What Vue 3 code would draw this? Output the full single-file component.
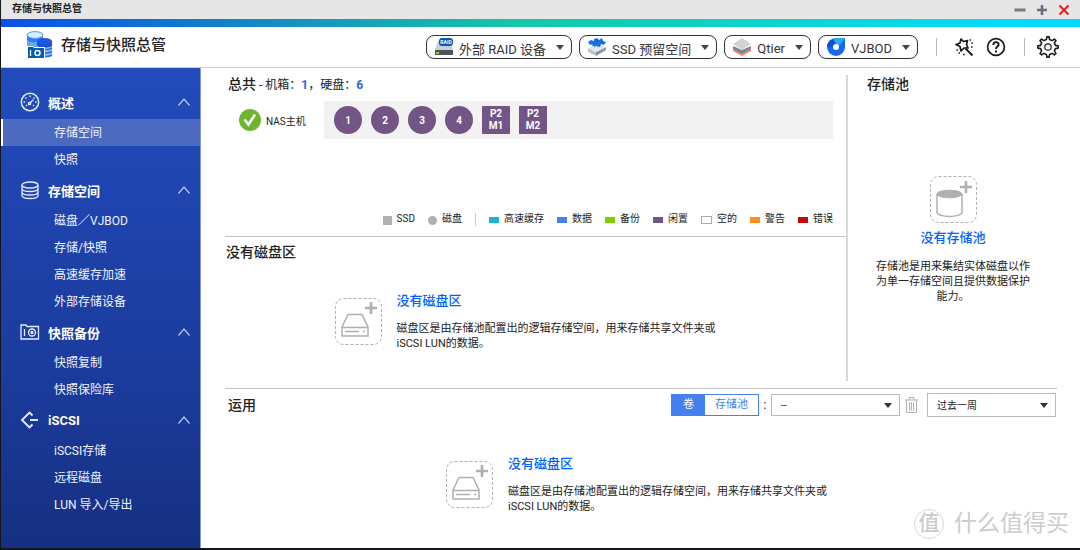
<script setup>
import { ref } from 'vue'

const groups = [
  { title: '概述', icon: 'gauge', items: ['存储空间', '快照'] },
  { title: '存储空间', icon: 'disks', items: ['磁盘／VJBOD', '存储/快照', '高速缓存加速', '外部存储设备'] },
  { title: '快照备份', icon: 'snapshot', items: ['快照复制', '快照保险库'] },
  { title: 'iSCSI', icon: 'iscsi', items: ['iSCSI存储', '远程磁盘', 'LUN 导入/导出'] }
]
const active = ref('0-0')

const tools = [
  { icon: 'raid', label: '外部 RAID 设备' },
  { icon: 'ssd', label: 'SSD 预留空间' },
  { icon: 'qtier', label: 'Qtier' },
  { icon: 'vjbod', label: 'VJBOD' }
]

const legend = [
  { label: '高速缓存', kind: 'cache' },
  { label: '数据', kind: 'data' },
  { label: '备份', kind: 'spare' },
  { label: '闲置', kind: 'free' },
  { label: '空的', kind: 'vacant' },
  { label: '警告', kind: 'warning' },
  { label: '错误', kind: 'error' }
]

const volumeText = '磁盘区是由存储池配置出的逻辑存储空间，用来存储共享文件夹或iSCSI LUN的数据。'

function gearPath(teeth, outer, inner) {
  const step = (Math.PI * 2) / teeth
  const at = (angle, r) =>
    `${(12 + r * Math.sin(angle)).toFixed(2)} ${(12 - r * Math.cos(angle)).toFixed(2)}`
  const parts = []
  for (let i = 0; i < teeth; i++) {
    const a = i * step
    parts.push(at(a - step * 0.27, inner), at(a - step * 0.14, outer), at(a + step * 0.14, outer), at(a + step * 0.27, inner))
  }
  return `M${parts.join('L')}Z`
}
const gear = gearPath(8, 10.2, 7.6)
</script>

<template>
  <div class="window">
    <header class="titlebar">
      <span class="window-name">存储与快照总管</span>
      <div class="window-buttons">
        <button type="button" aria-label="最小化">
          <svg width="12" height="12" viewBox="0 0 12 12"><path d="M0.5 6h11" stroke="#737a86" stroke-width="3" /></svg>
        </button>
        <button type="button" aria-label="最大化">
          <svg width="12" height="12" viewBox="0 0 12 12"><path d="M1 6h10M6 1v10" stroke="#686f7c" stroke-width="2.6" /></svg>
        </button>
        <button type="button" aria-label="关闭">
          <svg width="12" height="12" viewBox="0 0 12 12"><path d="M1.5 1.5l9 9M10.5 1.5l-9 9" stroke="#ee1c1c" stroke-width="2" /></svg>
        </button>
      </div>
    </header>
    <div class="stripe"></div>

    <div class="appbar">
      <svg class="logo" width="27" height="28" viewBox="0 0 27 28">
        <path d="M1 4v20h16V4z" fill="#5ca8fb" />
        <path d="M1 9c3 3 12 3 16 0v-5H1z" fill="#2f7df2" />
        <ellipse cx="9" cy="4" rx="8" ry="3.4" fill="#d5ecff" stroke="#4b9af7" />
        <path d="M11 10v15c3 2 12 2 15 0V10z" fill="#8cc4ff" />
        <path d="M11 10v5c4 2 11 2 15 0v-5z" fill="#1e50d8" />
        <path d="M15 18c4 1 8 1 11-1M17 21.500c3 1 7 0 9-1M17 25c3 1 7 0 9-1" stroke="#2d6be8" stroke-width="1.700" fill="none" />
        <ellipse cx="18.500" cy="10" rx="7.500" ry="3" fill="#2458dc" />
        <path d="M1 15h6l1 1h11v12H1z" fill="#fff" />
        <path d="M2 16h5l1 1h10v10H2z" fill="#075aac" />
        <path d="M4.500 19v6" stroke="#fff" stroke-width="1.300" />
        <circle cx="11.500" cy="22" r="2.500" fill="none" stroke="#fff" stroke-width="1.500" />
      </svg>
      <h1>存储与快照总管</h1>

      <div class="tools">
        <button v-for="t in tools" :key="t.icon" type="button" class="tool">
          <svg v-if="t.icon === 'raid'" width="20" height="18" viewBox="0 0 20 18">
            <path d="M4 3h12l3 9H1z" fill="#c9ced3" />
            <rect x="1" y="12" width="18" height="5" fill="#4b5560" />
            <rect x="2" y="14" width="3" height="2" fill="#7ee000" />
            <rect x="5" y="0" width="14" height="8" rx="3" fill="#0b57b0" />
            <text x="12" y="6" text-anchor="middle" class="raid-label">RAID</text>
          </svg>
          <svg v-else-if="t.icon === 'ssd'" width="20" height="18" viewBox="0 0 20 18">
            <path d="M1 10l8 4v4l-8-4z" fill="#b7c4d2" /><path d="M9 14l10-5v3l-10 6z" fill="#8896a6" />
            <path d="M1 10l9-5 9 4-10 5z" fill="#dfe8f1" />
            <path d="M1 4l3-2 3 1V1l3-1 2 2 3-2 1 3 3 1-2 3-3-1-1 3-4-1-2 1-1-3-3 1z" fill="#1673e6" />
            <path d="M6 5v3M10 2v3M15 3v3" stroke="#0a56bf" />
          </svg>
          <svg v-else-if="t.icon === 'qtier'" width="20" height="18" viewBox="0 0 20 18">
            <path d="M1 11l9 4 9-4v2l-9 5-9-5z" fill="#fa806d" />
            <path d="M1 8l9 4 9-4v3l-9 5-9-5z" fill="#7b8794" />
            <path d="M10 0l9 6-9 6-9-6z" fill="#d4d4d4" />
          </svg>
          <svg v-else width="20" height="18" viewBox="0 0 20 18">
            <path d="M19 0v9a9 9 0 1 1-9-9z" fill="#1668f2" />
            <path d="M19 0l-5 7-4-1-3-5 3-1z" fill="#29a9f5" />
            <path d="M1 9a9 9 0 0 1 6-8l3 5-3 3z" fill="#0d50d8" />
            <circle cx="10" cy="9" r="3" fill="#fff" />
          </svg>
          <span class="tool-label">{{ t.label }}</span>
          <svg width="8" height="5" viewBox="0 0 8 5"><path d="M0 0h8l-4 5z" fill="#444" /></svg>
        </button>
      </div>

      <div class="actions">
        <span class="divider"></span>
        <button type="button" class="wand" aria-label="向导">
          <svg width="20" height="20" viewBox="0 0 20 20" fill="none" stroke="#1a1a1a">
            <path d="M7 2l2.500 2.500 4-1-1 4 1.500 3.500-4 0-3 3-1-4.500L2 7.500l4-1.500z" stroke-width="1.700" stroke-linejoin="round" />
            <path d="M11.500 11.500l7 7" stroke-width="2" />
            <path d="M15.500 3h1.500M17.500 6h1.500M17 10h1.500M2.500 13h1.500M4.500 16h1.500M9 17.500h1.500" stroke-width="1.300" />
          </svg>
        </button>
        <button type="button" class="help" aria-label="帮助">
          <svg width="20" height="20" viewBox="0 0 20 20" fill="none" stroke="#1a1a1a">
            <circle cx="10" cy="10" r="8.400" stroke-width="1.700" />
            <path d="M7.300 8c0-4 5.400-3.600 5.400-.500C12.700 9.500 10 9.500 10 12" stroke-width="1.900" />
            <path d="M10 13.400v2" stroke-width="2" />
          </svg>
        </button>
        <span class="divider"></span>
        <button type="button" class="settings" aria-label="设置">
          <svg width="24" height="24" viewBox="0 0 24 24" fill="none" stroke="#1a1a1a">
            <path :d="gear" stroke-width="1.600" stroke-linejoin="round" />
            <circle cx="12" cy="12" r="3.200" stroke-width="1.200" />
          </svg>
        </button>
      </div>
    </div>

    <div class="body">
      <nav class="sidebar">
        <section v-for="(g, gi) in groups" :key="g.title">
          <button type="button" class="group">
            <svg width="20" height="20" viewBox="0 0 20 20" fill="none" stroke="#e6ecfb" stroke-width="1.300">
              <template v-if="g.icon === 'gauge'">
                <circle cx="10" cy="10" r="8.700" stroke-width="1.500" />
                <path d="M3.500 10h1.500M15 10h1.500M5.500 5.500l1 1M10 3.500V5M14.500 5.500l-1 1M9.500 11.500l4-4M6 14l1-1M14 14l-1-1" />
                <circle cx="9.500" cy="11.500" r="1.200" />
              </template>
              <template v-else-if="g.icon === 'disks'">
                <ellipse cx="10" cy="5" rx="8" ry="3" />
                <path d="M2 5v10.500c0 4 16 4 16 0V5M2 8.500c0 4 16 4 16 0M2 12c0 4 16 4 16 0" />
              </template>
              <template v-else-if="g.icon === 'snapshot'">
                <path d="M1 17V3h5l1 1.500h11.500V17z" />
                <path d="M4.500 7v7" />
                <circle cx="12" cy="10.500" r="3.500" /><circle cx="12" cy="10.500" r="1" fill="#e6ecfb" />
              </template>
              <template v-else>
                <path d="M12.500 5.500L9.500 2.500 2 10l7.500 7.500 3-3M10 10h8" stroke-width="1.900" />
              </template>
            </svg>
            <span>{{ g.title }}</span>
            <svg class="chevron" width="12" height="8" viewBox="0 0 12 8" fill="none"><path d="M0.500 7.500L6 1l5.500 6.500" stroke="#b7c6ee" stroke-width="1.200" /></svg>
          </button>
          <a
            v-for="(item, ii) in g.items"
            :key="item"
            href="#"
            class="item"
            :class="{ active: active === gi + '-' + ii }"
            @click.prevent="active = gi + '-' + ii"
          >{{ item }}</a>
        </section>
      </nav>

      <main>
        <div class="upper">
          <div class="left">
            <section class="overview">
              <p class="summary"><strong>总共</strong> - 机箱：<b>1</b>，硬盘：<b>6</b></p>
              <div class="host">
                <svg width="22" height="22" viewBox="0 0 22 22">
                  <circle cx="11" cy="11" r="11" fill="#6db52f" />
                  <path d="M5.500 10.500l4 5 6.500-10" fill="none" stroke="#fff" stroke-width="2.600" />
                </svg>
                <span class="host-name">NAS主机</span>
                <div class="disks">
                  <button v-for="n in 4" :key="n" type="button" class="disk">{{ n }}</button>
                  <button v-for="n in 2" :key="'m' + n" type="button" class="disk module"><span>P2</span><span>M{{ n }}</span></button>
                </div>
              </div>
              <ul class="legend">
                <li><i class="shape"></i>SSD</li>
                <li><i class="shape round"></i>磁盘</li>
                <li class="legend-divider"></li>
                <li v-for="l in legend" :key="l.kind"><i class="swatch" :class="l.kind"></i>{{ l.label }}</li>
              </ul>
            </section>

            <section class="volumes">
              <h2>没有磁盘区</h2>
              <div class="empty">
                <svg class="add-icon" width="47" height="47" viewBox="0 0 47 47" fill="none" stroke="#b0b0b0">
                  <rect x="0.500" y="0.500" width="46" height="46" rx="8" stroke-dasharray="3 2" />
                  <path d="M30 10h12M36 4v12" stroke-width="2.600" />
                  <path d="M7 29l6-12.500h14L33 29v9H7zM7 29.500h26" stroke-width="1.500" />
                  <path d="M10 33.500h14M28 33.500h2" stroke-width="1.500" />
                </svg>
                <div class="empty-text">
                  <a href="#">没有磁盘区</a>
                  <p>{{ volumeText }}</p>
                </div>
              </div>
            </section>
          </div>

          <section class="pool">
            <h2>存储池</h2>
            <div class="pool-empty">
              <svg width="47" height="47" viewBox="0 0 47 47" fill="none" stroke="#b0b0b0">
                <rect x="0.500" y="0.500" width="46" height="46" rx="8" stroke-dasharray="3 2" />
                <path d="M30 11h12M36 5v12" stroke-width="2.600" />
                <path d="M7 18v18c0 6 25 6 25 0V18" stroke-width="1.500" />
                <ellipse cx="19.500" cy="18" rx="12.500" ry="3.800" fill="#b0b0b0" />
              </svg>
              <a href="#">没有存储池</a>
              <p>存储池是用来集结实体磁盘以作为单一存储空间且提供数据保护能力。</p>
            </div>
          </section>
        </div>

        <section class="usage">
          <div class="usage-bar">
            <h2>运用</h2>
            <div class="segment">
              <button type="button" class="on">卷</button>
              <button type="button">存储池</button>
            </div>
            <span class="colon">:</span>
            <div class="select">
              <select aria-label="卷"><option>--</option></select>
              <svg width="8" height="5" viewBox="0 0 8 5"><path d="M0 0h8l-4 5z" fill="#333" /></svg>
            </div>
            <button type="button" class="trash" aria-label="删除">
              <svg width="13" height="16" viewBox="0 0 13 16" fill="none" stroke="#b0b0b0">
                <path d="M0 3h13M4 2.500v-2h5v2M1.500 3v12.500h10V3M4.500 5v8.500M6.500 5v8.500M8.500 5v8.500" />
              </svg>
            </button>
            <div class="select period">
              <select aria-label="时间范围"><option>过去一周</option></select>
              <svg width="8" height="5" viewBox="0 0 8 5"><path d="M0 0h8l-4 5z" fill="#333" /></svg>
            </div>
          </div>
          <div class="empty">
            <svg class="add-icon" width="47" height="47" viewBox="0 0 47 47" fill="none" stroke="#b0b0b0">
              <rect x="0.500" y="0.500" width="46" height="46" rx="8" stroke-dasharray="3 2" />
              <path d="M30 10h12M36 4v12" stroke-width="2.600" />
              <path d="M7 29l6-12.500h14L33 29v9H7zM7 29.500h26" stroke-width="1.500" />
              <path d="M10 33.500h14M28 33.500h2" stroke-width="1.500" />
            </svg>
            <div class="empty-text">
              <a href="#">没有磁盘区</a>
              <p>{{ volumeText }}</p>
            </div>
          </div>
        </section>
      </main>
    </div>

    <div class="watermark"><span class="seal">值</span>什么值得买</div>
  </div>
</template>

<style>
body {
  margin: 0;
}
</style>

<style scoped>
* {
  box-sizing: border-box;
}
.window {
  position: relative;
  display: flex;
  flex-direction: column;
  min-height: 100vh;
  border-left: 1px solid #15161c;
  border-bottom: 2px solid #15161c;
  background: #fff;
  color: #222;
  font-family: Roboto, "Noto Sans CJK SC", sans-serif;
  font-size: 12px;
}
svg {
  display: block;
  flex: none;
}
button {
  margin: 0;
  padding: 0;
  border: 0;
  background: none;
  color: inherit;
  font: inherit;
  cursor: pointer;
}
h1,
h2,
p,
ul {
  margin: 0;
  padding: 0;
}
a {
  text-decoration: none;
}
.titlebar {
  display: flex;
  align-items: center;
  justify-content: space-between;
  height: 19px;
  padding: 0 10px 0 11px;
  background: #e6e6e6;
}
.window-name {
  padding-bottom: 2px;
  font-size: 10px;
  font-weight: 700;
  line-height: 16px;
}
.window-buttons {
  display: flex;
  gap: 10px;
}
.stripe {
  height: 8px;
  background: linear-gradient(90deg, #0b50ec, #1180c8 20%, #16a0ba 33%, #14c8a8 48%, #0dd3c8 68%, #00dcff 95%);
}
.appbar {
  display: flex;
  align-items: center;
  height: 41px;
  padding: 0 20px 0 25px;
  border-bottom: 1px solid #ccc;
}
.logo {
  margin-bottom: 4px;
}
h1 {
  margin-left: 8px;
  padding-bottom: 4px;
  font-size: 15px;
  font-weight: 500;
  line-height: 24px;
  white-space: nowrap;
}
.tools {
  display: flex;
  gap: 7px;
  margin-left: auto;
}
.tool {
  display: flex;
  align-items: center;
  height: 24px;
  padding: 0 7px;
  border: 1px solid #333;
  border-radius: 8px;
  color: #333;
  font-size: 13px;
  white-space: nowrap;
}
.tool-label {
  margin: 0 10px 0 5px;
  padding-top: 2px;
}
.raid-label {
  fill: #fff;
  font-size: 5px;
  font-weight: 700;
}
.actions {
  display: flex;
  align-items: center;
  margin-left: 18px;
}
.divider {
  width: 1px;
  height: 18px;
  background: #bbb8a8;
}
.wand {
  margin-left: 17px;
}
.help {
  margin: 0 18px 0 12px;
}
.settings {
  margin-left: 11px;
}
.body {
  display: flex;
  flex: 1;
}
.sidebar {
  flex: none;
  width: 200px;
  padding-top: 17px;
  border-right: 1px solid #8598cf;
  background: linear-gradient(#224bbc, #1b3b9c 65%, #162f80);
  color: #fff;
}
.group {
  display: flex;
  align-items: center;
  width: 100%;
  height: 34px;
  padding: 0 10px 0 19px;
  font-size: 13px;
  font-weight: 700;
}
.group span {
  margin-left: 8px;
}
.chevron {
  margin-left: auto;
}
.item {
  display: block;
  height: 27px;
  padding-left: 53px;
  color: #f0f4ff;
  line-height: 28px;
}
.item.active {
  padding-left: 51px;
  border-left: 2px solid #fff;
  background: #4c6ac0;
}
main {
  flex: 1;
  min-width: 0;
  padding: 7px 23px 20px 24px;
}
h2 {
  font-size: 14px;
  font-weight: 500;
  line-height: 18px;
}
.upper {
  display: flex;
}
.left {
  flex: 1;
  min-width: 0;
}
.overview {
  padding-right: 13px;
  border-bottom: 1px solid #c4c4c4;
}
.summary {
  padding-left: 3px;
  line-height: 18px;
}
.summary strong {
  font-size: 14px;
  font-weight: 500;
}
.summary b {
  color: #2468d8;
}
.host {
  display: flex;
  align-items: center;
  margin-top: 7px;
  padding-left: 14px;
}
.host-name {
  width: 58px;
  margin-left: 5px;
  font-size: 10px;
}
.disks {
  display: flex;
  flex: 1;
  gap: 9px;
  padding: 5px 10px;
  background: #f2f2f2;
}
.disk {
  width: 28px;
  height: 28px;
  border-radius: 50%;
  background: #725586;
  color: #fff;
  font-size: 10px;
  font-weight: 700;
}
.module {
  display: flex;
  flex-direction: column;
  align-items: center;
  justify-content: center;
  border-radius: 0;
  line-height: 12px;
}
.legend {
  display: flex;
  align-items: center;
  justify-content: flex-end;
  gap: 13px;
  margin-top: 71px;
  padding-bottom: 8px;
  list-style: none;
  font-size: 10px;
  line-height: 18px;
}
.legend li {
  display: flex;
  align-items: center;
  gap: 5px;
}
.legend .legend-divider {
  width: 1px;
  height: 13px;
  background: #ccc;
}
.shape {
  width: 9px;
  height: 9px;
  margin-top: 2px;
  background: #b0b0b0;
}
.shape.round {
  border-radius: 50%;
}
.swatch {
  width: 10px;
  height: 6px;
  margin-top: 2px;
}
.cache {
  background: #1db4cc;
}
.data {
  background: #4580ee;
}
.spare {
  background: #80d000;
}
.free {
  background: #725586;
}
.vacant {
  width: 11px;
  height: 8px;
  border: 1px solid #aaa;
}
.warning {
  background: #ff9018;
}
.error {
  background: #c80808;
}
.volumes {
  padding: 6px 0 37px;
}
.volumes h2 {
  padding-left: 1px;
}
.empty {
  display: flex;
  justify-content: center;
  gap: 15px;
}
.volumes .empty {
  padding: 31px 20px 0 0;
}
.add-icon {
  margin-top: 6px;
}
.empty-text {
  max-width: 320px;
}
.empty-text a,
.pool-empty a {
  color: #0060ff;
  font-size: 13px;
  font-weight: 500;
  line-height: 18px;
}
.empty-text p,
.pool-empty p {
  font-size: 11px;
  line-height: 15px;
}
.empty-text p {
  margin-top: 11px;
}
.pool {
  flex: none;
  width: 211px;
  margin-bottom: 7px;
  padding-left: 19px;
  border-left: 2px solid #d8d8d8;
}
.pool-empty {
  display: flex;
  flex-direction: column;
  align-items: center;
  width: 154px;
  margin: 83px 0 0 9px;
  text-align: center;
}
.pool-empty a {
  margin-top: 6px;
}
.pool-empty p {
  margin-top: 12px;
}
.usage {
  border-top: 1px solid #c4c4c4;
}
.usage-bar {
  display: flex;
  align-items: center;
  padding: 4px 1px 0 3px;
}
.segment {
  display: flex;
  margin-left: auto;
  border: 1px solid #4580ee;
}
.segment button {
  height: 20px;
  padding: 0 10px;
  color: #4580ee;
  font-size: 11px;
  line-height: 20px;
}
.segment .on {
  padding: 0 11px;
  background: #4580ee;
  color: #fff;
}
.colon {
  width: 12px;
  text-align: center;
}
.select {
  display: grid;
  align-items: center;
  width: 129px;
}
.select > * {
  grid-area: 1 / 1;
}
.select select {
  width: 100%;
  height: 22px;
  padding: 0 9px;
  border: 1px solid #bbb;
  border-radius: 0;
  background: #fff;
  color: #222;
  font: inherit;
  font-size: 10px;
  appearance: none;
}
.select.period select {
  height: 24px;
}
.select svg {
  justify-self: end;
  margin-right: 8px;
  pointer-events: none;
}
.trash {
  margin: 0 9px 0 5px;
}
.usage .empty {
  padding: 38px 8px 0 0;
}
.watermark {
  position: absolute;
  right: 11px;
  bottom: 8px;
  display: flex;
  align-items: center;
  gap: 10px;
  color: #ccc;
  font-size: 23px;
  line-height: 32px;
}
.seal {
  width: 30px;
  height: 30px;
  border: 1px solid #d8d8d8;
  border-radius: 50%;
  font-size: 21px;
  font-weight: 500;
  line-height: 26px;
  text-align: center;
}
</style>
